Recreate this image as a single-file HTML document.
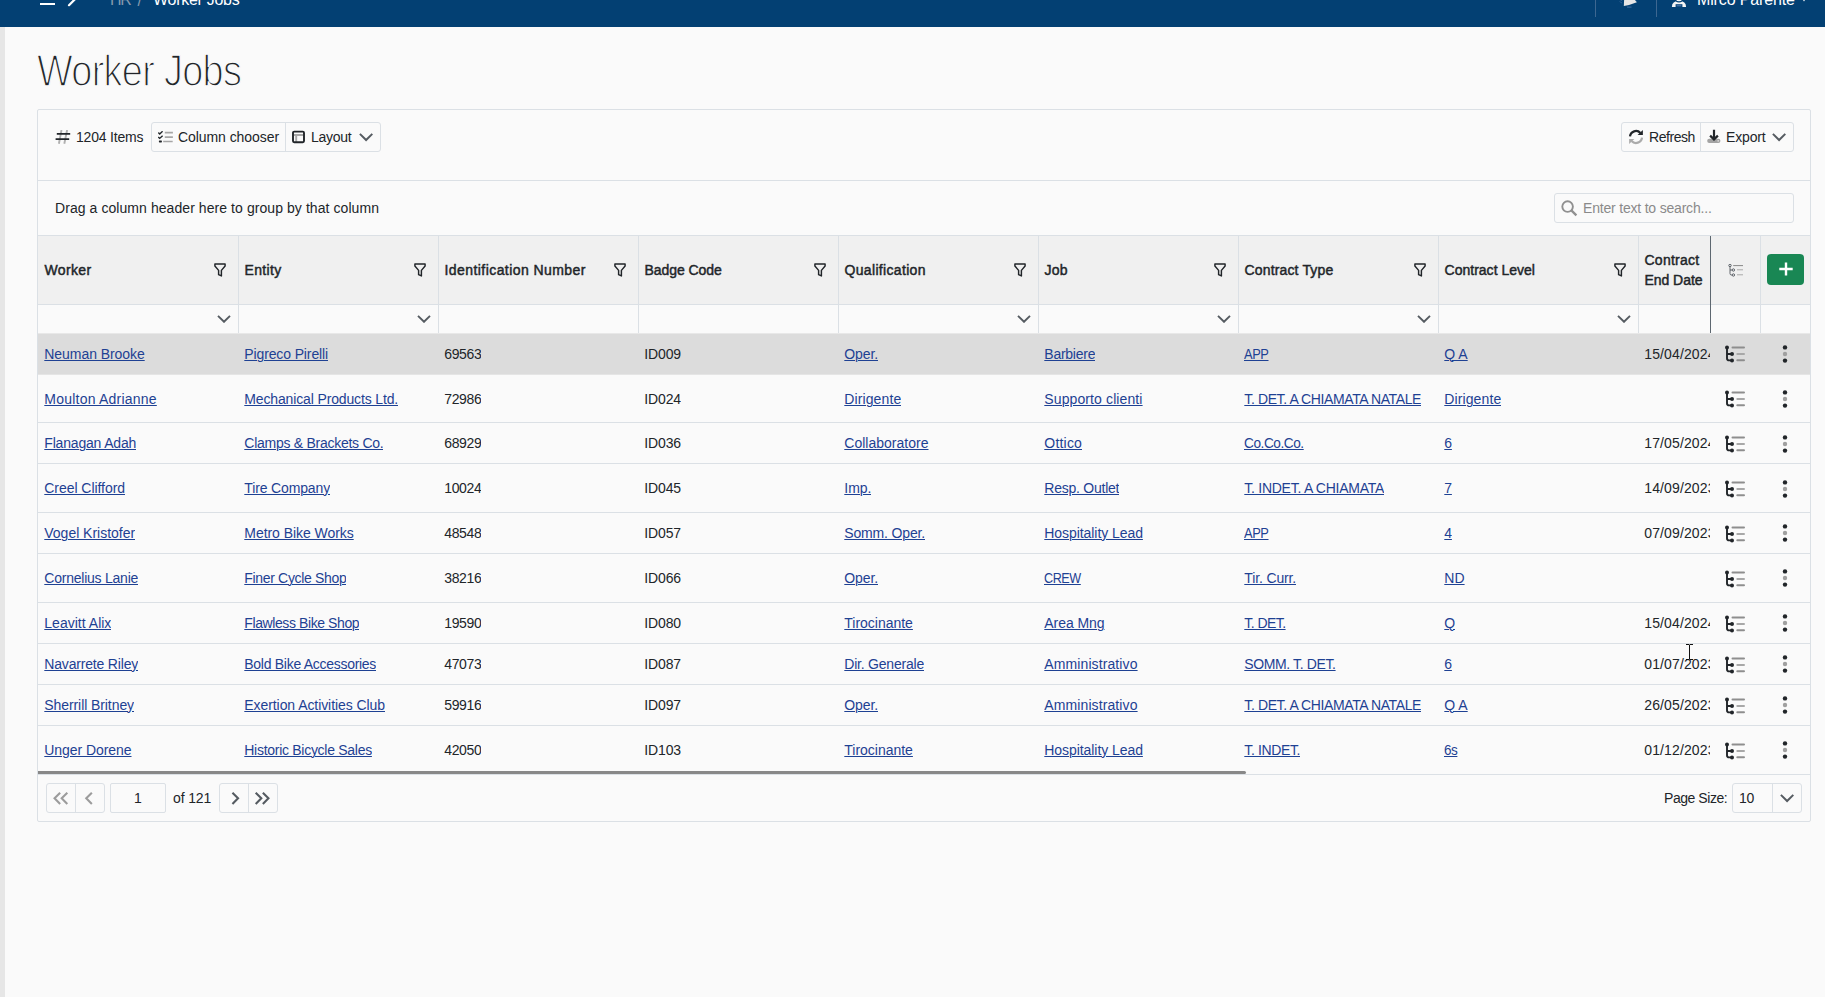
<!DOCTYPE html>
<html lang="en"><head><meta charset="utf-8"><title>Worker Jobs</title>
<style>
*{box-sizing:border-box;margin:0;padding:0}
html,body{width:1825px;height:997px;overflow:hidden;background:#fafafa}
body{position:relative;font-family:"Liberation Sans",sans-serif;font-size:14px;color:#212529;line-height:20px}
.abs{position:absolute}
#top{position:absolute;left:0;top:0;width:1825px;height:27px;background:#034073;overflow:hidden}
#top span{position:absolute;white-space:nowrap;font-size:16px;line-height:20px;color:#fff}
#stripe{position:absolute;left:0;top:27px;width:5px;height:970px;background:#e6e6e6}
h1{position:absolute;left:36.5px;top:46.5px;font-size:44px;line-height:48px;font-weight:400;color:#212529;white-space:nowrap;transform-origin:0 50%;transform:scaleX(.86);letter-spacing:-.8px;-webkit-text-stroke:1.5px #fafafa}
#card{position:absolute;left:37px;top:109px;width:1774px;height:713px;border:1px solid #dbe0e5;border-radius:2px;background:#fafafa}
.hl{position:absolute;height:1px;background:#dbe0e5}
.vl{position:absolute;width:1px;background:#dbe0e5}
.bg{position:absolute;border:1px solid #dbe0e5;border-radius:3px;background:#fafafa}
.t{position:absolute;white-space:nowrap;line-height:20px}
a{color:#1e4193;text-decoration:underline;text-underline-offset:1px;text-decoration-thickness:1px}
.hd{font-weight:400;color:#212529;-webkit-text-stroke:.45px #212529}
svg{position:absolute;display:block}
.row{position:absolute;left:38px;width:1772px}
.c{position:absolute;top:50%;white-space:nowrap;line-height:20px;overflow:hidden}
</style></head><body>
<div id="top">
<svg style="left:40px;top:0" width="40" height="8" viewBox="0 0 40 8"><rect x="0" y="3" width="15" height="2" fill="#fff"/><path d="M29 5.2L36 -1.8" stroke="#fff" stroke-width="2.2" stroke-linecap="round"/></svg>
<span style="left:110px;top:-10px;color:#8499ad;letter-spacing:-1.4px">HR</span>
<span style="left:137.6px;top:-8.6px;color:#8499ad">/</span>
<span style="left:153px;top:-10px;letter-spacing:-.28px">Worker Jobs</span>
<div class="abs" style="left:1595px;top:0;width:1px;height:17px;background:#3d6791"></div>
<div class="abs" style="left:1656px;top:0;width:1px;height:17px;background:#3d6791"></div>
<svg style="left:1618px;top:0" width="22" height="9" viewBox="0 0 22 9"><path d="M6.2 -1L5.8 5.9L11 5.1L18.9 2.2L16 -1z" fill="#e6e6e6"/><path d="M9 7.1H13.5" stroke="#3f6ea3" stroke-width="1"/><path d="M1.5 1.5L4 3M2 -0.5L4.2 1" stroke="#2c5c93" stroke-width=".9"/></svg>
<svg style="left:1671px;top:0" width="16" height="8" viewBox="0 0 16 8"><path d="M0.9 6.9Q0.9 1 8 1Q15.1 1 15.1 6.9z" fill="#f4f4f4"/><ellipse cx="8" cy="-1.6" rx="4.6" ry="4.2" fill="#034073"/><ellipse cx="8" cy="-2.4" rx="3.6" ry="3.6" fill="#f4f4f4"/><rect x="4.6" y="4.2" width="6.8" height="2.8" fill="#034073"/><rect x="5.6" y="4.8" width="4.8" height="1.6" fill="#3f6ea3"/></svg>
<span style="left:1697px;top:-10px;letter-spacing:-.14px">Mirco Parente</span>
<svg style="left:1801px;top:0" width="6" height="3" viewBox="0 0 6 3"><path d="M0.5 -2.5L3 1.5L5.5 -2.5z" fill="#fff"/></svg>
</div>
<div id="stripe"></div>
<h1>Worker Jobs</h1>
<div id="card"></div>
<svg style="left:55px;top:130px" width="16" height="14" viewBox="0 0 16 14"><path d="M6.5 0L3.9 13.8M12.1 0L9.3 13.8" stroke="#b0b0b0" stroke-width="1.9"/><path d="M1.8 3.9H15.2M0.6 9.05H14.2" stroke="#212529" stroke-width="1.8"/></svg>
<div class="t" style="left:76px;top:127px;letter-spacing:-0.197px">1204 Items</div>
<div class="bg" style="left:151px;top:122px;width:230px;height:30px"></div>
<div class="vl" style="left:285px;top:123px;height:28px"></div>
<svg style="left:158px;top:130.6px" width="15" height="12" viewBox="0 0 15 12"><path d="M0.3 1.6L1.7 3L4.6 0.3M0.3 6L1.7 7.4L4.6 4.7" fill="none" stroke="#212529" stroke-width="1.4"/><rect x="0.9" y="9.4" width="3" height="2" rx=".6" fill="#212529"/><path d="M6.8 1.6H14.9M6.8 6.1H14.9M5.2 10.5H14.7" stroke="#a6a6a6" stroke-width="1.7"/></svg>
<div class="t" style="left:178px;top:127px;letter-spacing:-0.067px">Column chooser</div>
<svg style="left:292px;top:130px" width="13" height="14" viewBox="0 0 13 14"><path d="M2 5H11M4.2 5V12" stroke="#a8a8a8" stroke-width="1.9" fill="none"/><rect x="1" y="1.6" width="11" height="10.6" rx="1.2" fill="none" stroke="#212529" stroke-width="1.9"/></svg>
<div class="t" style="left:311px;top:127px;letter-spacing:-0.274px">Layout</div>
<svg style="left:359px;top:133px" width="15" height="9" viewBox="0 0 15 9"><path d="M0.9 0.9L7.1 7L13.3 0.9" fill="none" stroke="#555b61" stroke-width="2"/></svg>

<div class="bg" style="left:1621px;top:122px;width:173px;height:30px"></div>
<div class="vl" style="left:1700px;top:123px;height:28px"></div>
<svg style="left:1628px;top:129px" width="16" height="16" viewBox="0 0 16 16"><path d="M2 7.4A6 6 0 0 1 12.4 4" fill="none" stroke="#212529" stroke-width="2.2"/><path d="M14.9 0.9V6H9.6z" fill="#212529"/><path d="M14 8.6A6 6 0 0 1 3.6 12" fill="none" stroke="#ababab" stroke-width="2.2"/><path d="M1.1 15.1V10H6.4z" fill="#ababab"/></svg>
<div class="t" style="left:1649px;top:127px;letter-spacing:-0.450px">Refresh</div>
<svg style="left:1707px;top:129px" width="14" height="15" viewBox="0 0 14 15"><rect x="0.2" y="9.7" width="13.2" height="4.2" rx="2" fill="#a3a3a3"/><circle cx="11.2" cy="11.9" r=".8" fill="#dcdcdc"/><path d="M7 0.8V9.6M3.1 6.6L7 10.4L10.9 6.6" fill="none" stroke="#212529" stroke-width="2.2"/></svg>
<div class="t" style="left:1726px;top:127px;letter-spacing:-0.145px">Export</div>
<svg style="left:1772px;top:133px" width="15" height="9" viewBox="0 0 15 9"><path d="M0.9 0.9L7.1 7L13.3 0.9" fill="none" stroke="#555b61" stroke-width="2"/></svg>

<div class="hl" style="left:38px;top:180px;width:1772px"></div>
<div class="t" style="left:55px;top:198px;letter-spacing:0.069px">Drag a column header here to group by that column</div>
<div class="bg" style="left:1554px;top:193px;width:240px;height:30px"></div>
<svg style="left:1561px;top:200px" width="17" height="17" viewBox="0 0 17 17"><circle cx="6.6" cy="6.6" r="5.3" fill="none" stroke="#909090" stroke-width="1.9"/><path d="M10.4 10.4L15.4 15.4" stroke="#909090" stroke-width="2.3"/></svg>
<div class="t" style="left:1583px;top:198px;color:#8a8a8a;letter-spacing:-0.194px">Enter text to search...</div>
<div class="abs" style="left:38px;top:235px;width:1772px;height:70px;background:#f0f0f0;border-top:1px solid #dbe0e5;border-bottom:1px solid #dbe0e5"></div>
<div class="t hd" style="left:44.5px;top:260px;letter-spacing:0.357px">Worker</div><svg style="left:213px;top:263px" width="14" height="15" viewBox="0 0 14 15"><path d="M1.9 0.9h10.2v2.1L8.4 7.4v5.5L5.6 11.7V7.4L1.9 3z" fill="none" stroke="#212529" stroke-width="1.45" stroke-linejoin="round"/></svg><svg style="left:217px;top:315px" width="14" height="8" viewBox="0 0 14 8"><path d="M1 0.9L7 6.8L13 0.9" fill="none" stroke="#555b61" stroke-width="1.9"/></svg>
<div class="t hd" style="left:244.5px;top:260px;letter-spacing:0.364px">Entity</div><svg style="left:413px;top:263px" width="14" height="15" viewBox="0 0 14 15"><path d="M1.9 0.9h10.2v2.1L8.4 7.4v5.5L5.6 11.7V7.4L1.9 3z" fill="none" stroke="#212529" stroke-width="1.45" stroke-linejoin="round"/></svg><svg style="left:417px;top:315px" width="14" height="8" viewBox="0 0 14 8"><path d="M1 0.9L7 6.8L13 0.9" fill="none" stroke="#555b61" stroke-width="1.9"/></svg>
<div class="t hd" style="left:444.5px;top:260px;letter-spacing:0.433px">Identification Number</div><svg style="left:613px;top:263px" width="14" height="15" viewBox="0 0 14 15"><path d="M1.9 0.9h10.2v2.1L8.4 7.4v5.5L5.6 11.7V7.4L1.9 3z" fill="none" stroke="#212529" stroke-width="1.45" stroke-linejoin="round"/></svg>
<div class="t hd" style="left:644.5px;top:260px;letter-spacing:-0.064px">Badge Code</div><svg style="left:813px;top:263px" width="14" height="15" viewBox="0 0 14 15"><path d="M1.9 0.9h10.2v2.1L8.4 7.4v5.5L5.6 11.7V7.4L1.9 3z" fill="none" stroke="#212529" stroke-width="1.45" stroke-linejoin="round"/></svg>
<div class="t hd" style="left:844.5px;top:260px;letter-spacing:0.327px">Qualification</div><svg style="left:1013px;top:263px" width="14" height="15" viewBox="0 0 14 15"><path d="M1.9 0.9h10.2v2.1L8.4 7.4v5.5L5.6 11.7V7.4L1.9 3z" fill="none" stroke="#212529" stroke-width="1.45" stroke-linejoin="round"/></svg><svg style="left:1017px;top:315px" width="14" height="8" viewBox="0 0 14 8"><path d="M1 0.9L7 6.8L13 0.9" fill="none" stroke="#555b61" stroke-width="1.9"/></svg>
<div class="t hd" style="left:1044.5px;top:260px;letter-spacing:0.241px">Job</div><svg style="left:1213px;top:263px" width="14" height="15" viewBox="0 0 14 15"><path d="M1.9 0.9h10.2v2.1L8.4 7.4v5.5L5.6 11.7V7.4L1.9 3z" fill="none" stroke="#212529" stroke-width="1.45" stroke-linejoin="round"/></svg><svg style="left:1217px;top:315px" width="14" height="8" viewBox="0 0 14 8"><path d="M1 0.9L7 6.8L13 0.9" fill="none" stroke="#555b61" stroke-width="1.9"/></svg>
<div class="t hd" style="left:1244.5px;top:260px;letter-spacing:0.153px">Contract Type</div><svg style="left:1413px;top:263px" width="14" height="15" viewBox="0 0 14 15"><path d="M1.9 0.9h10.2v2.1L8.4 7.4v5.5L5.6 11.7V7.4L1.9 3z" fill="none" stroke="#212529" stroke-width="1.45" stroke-linejoin="round"/></svg><svg style="left:1417px;top:315px" width="14" height="8" viewBox="0 0 14 8"><path d="M1 0.9L7 6.8L13 0.9" fill="none" stroke="#555b61" stroke-width="1.9"/></svg>
<div class="t hd" style="left:1444.5px;top:260px;letter-spacing:0.016px">Contract Level</div><svg style="left:1613px;top:263px" width="14" height="15" viewBox="0 0 14 15"><path d="M1.9 0.9h10.2v2.1L8.4 7.4v5.5L5.6 11.7V7.4L1.9 3z" fill="none" stroke="#212529" stroke-width="1.45" stroke-linejoin="round"/></svg><svg style="left:1617px;top:315px" width="14" height="8" viewBox="0 0 14 8"><path d="M1 0.9L7 6.8L13 0.9" fill="none" stroke="#555b61" stroke-width="1.9"/></svg>
<div class="t hd" style="left:1644.5px;top:250px;letter-spacing:0.260px">Contract</div><div class="t hd" style="left:1644.5px;top:270px;letter-spacing:-0.047px">End Date</div>
<div class="vl" style="left:238px;top:236px;height:97px"></div><div class="vl" style="left:438px;top:236px;height:97px"></div><div class="vl" style="left:638px;top:236px;height:97px"></div><div class="vl" style="left:838px;top:236px;height:97px"></div><div class="vl" style="left:1038px;top:236px;height:97px"></div><div class="vl" style="left:1238px;top:236px;height:97px"></div><div class="vl" style="left:1438px;top:236px;height:97px"></div><div class="vl" style="left:1638px;top:236px;height:97px"></div><div class="abs" style="left:1710px;top:236px;width:1px;height:97px;background:#5d6770"></div><div class="vl" style="left:1760px;top:236px;height:97px"></div>
<svg style="left:1728px;top:263.6px" width="16" height="13" viewBox="0 0 16 13"><path d="M2 2V9.5Q2 11 3.5 11H4.4M2 6H4.4" fill="none" stroke="#3f454c" stroke-width=".8"/><circle cx="2" cy="1.5" r="1.2" fill="#f0f0f0" stroke="#3f454c" stroke-width=".8"/><circle cx="5.4" cy="6" r="1.2" fill="#f0f0f0" stroke="#3f454c" stroke-width=".8"/><circle cx="5.4" cy="11" r="1.2" fill="#f0f0f0" stroke="#3f454c" stroke-width=".8"/><path d="M5.2 1.6H15" stroke="#7d7d7d" stroke-width=".9"/><path d="M9 5.8H15M9 10.8H15" stroke="#a2a2a2" stroke-width=".9"/></svg>
<div class="abs" style="left:1767px;top:254px;width:37px;height:31px;border-radius:4px;background:#198754"></div><svg style="left:1778.5px;top:262.3px" width="14" height="14" viewBox="0 0 14 14"><path d="M7 0.6V13.4M0.3 7H13.7" stroke="#fff" stroke-width="2.4"/></svg>
<div class="abs" style="left:38px;top:333px;width:1772px;height:42px;background:#e5e5e5;border-top:1px solid #e8e8e8"></div><div class="row" style="top:334px;height:40px;background:#dcdcdc;"><div class="c" style="left:6.3px;margin-top:-10.5px;max-width:192px;letter-spacing:-0.059px"><a>Neuman Brooke</a></div><div class="c" style="left:206.3px;margin-top:-10.5px;max-width:192px;letter-spacing:-0.126px"><a>Pigreco Pirelli</a></div><div class="c" style="left:406.3px;margin-top:-10.5px;max-width:192px;letter-spacing:-0.388px">69563</div><div class="c" style="left:606.3px;margin-top:-10.5px;max-width:192px;letter-spacing:-0.152px">ID009</div><div class="c" style="left:806.3px;margin-top:-10.5px;max-width:192px;letter-spacing:-0.090px"><a>Oper.</a></div><div class="c" style="left:1006.3px;margin-top:-10.5px;max-width:192px;letter-spacing:-0.253px"><a>Barbiere</a></div><div class="c" style="left:1206.3px;margin-top:-10.5px;max-width:192px;letter-spacing:-0.450px"><a style="display:inline-block;transform-origin:0 50%;transform:scaleX(0.919)">APP</a></div><div class="c" style="left:1406.3px;margin-top:-10.5px;max-width:192px;letter-spacing:0.014px"><a>Q A</a></div><div class="c" style="left:1606.3px;margin-top:-10.5px;max-width:65.7px;letter-spacing:0.122px">15/04/2024</div><svg style="left:1686px;top:50%;margin-top:-9.0px" width="22" height="18" viewBox="0 0 22 18"><path d="M3 2.4V13.2Q3 15.4 5.2 15.4H8M3 9H8" fill="none" stroke="#212529" stroke-width="1.9"/><circle cx="3" cy="2.4" r="2" fill="#212529"/><circle cx="8" cy="9" r="2" fill="#212529"/><circle cx="8" cy="15.4" r="2" fill="#212529"/><path d="M8.5 2.5H20M13.3 15.3H20" stroke="#8e8e8e" stroke-width="2" stroke-linecap="round"/><path d="M13.3 9H20" stroke="#a8a8a8" stroke-width="2" stroke-linecap="round"/></svg><svg style="left:1744.2px;top:50%;margin-top:-9.1px" width="6" height="18" viewBox="0 0 6 18"><circle cx="3" cy="2.4" r="2.2" fill="#212529"/><circle cx="3" cy="9" r="2.2" fill="#a0a0a0"/><circle cx="3" cy="15.6" r="2.2" fill="#212529"/></svg></div>
<div class="row" style="top:374px;height:48px;"><div class="c" style="left:6.3px;margin-top:-9.2px;max-width:192px;letter-spacing:0.221px"><a>Moulton Adrianne</a></div><div class="c" style="left:206.3px;margin-top:-9.2px;max-width:192px;letter-spacing:-0.142px"><a>Mechanical Products Ltd.</a></div><div class="c" style="left:406.3px;margin-top:-9.2px;max-width:192px;letter-spacing:-0.388px">72986</div><div class="c" style="left:606.3px;margin-top:-9.2px;max-width:192px;letter-spacing:-0.152px">ID024</div><div class="c" style="left:806.3px;margin-top:-9.2px;max-width:192px;letter-spacing:0.108px"><a>Dirigente</a></div><div class="c" style="left:1006.3px;margin-top:-9.2px;max-width:192px;letter-spacing:0.112px"><a>Supporto clienti</a></div><div class="c" style="left:1206.3px;margin-top:-9.2px;max-width:192px;letter-spacing:-0.390px"><a>T. DET. A CHIAMATA NATALE</a></div><div class="c" style="left:1406.3px;margin-top:-9.2px;max-width:192px;letter-spacing:0.108px"><a>Dirigente</a></div><svg style="left:1686px;top:50%;margin-top:-7.7px" width="22" height="18" viewBox="0 0 22 18"><path d="M3 2.4V13.2Q3 15.4 5.2 15.4H8M3 9H8" fill="none" stroke="#212529" stroke-width="1.9"/><circle cx="3" cy="2.4" r="2" fill="#212529"/><circle cx="8" cy="9" r="2" fill="#212529"/><circle cx="8" cy="15.4" r="2" fill="#212529"/><path d="M8.5 2.5H20M13.3 15.3H20" stroke="#8e8e8e" stroke-width="2" stroke-linecap="round"/><path d="M13.3 9H20" stroke="#a8a8a8" stroke-width="2" stroke-linecap="round"/></svg><svg style="left:1744.2px;top:50%;margin-top:-7.8px" width="6" height="18" viewBox="0 0 6 18"><circle cx="3" cy="2.4" r="2.2" fill="#212529"/><circle cx="3" cy="9" r="2.2" fill="#a0a0a0"/><circle cx="3" cy="15.6" r="2.2" fill="#212529"/></svg></div>
<div class="row" style="top:422px;height:41px;border-top:1px solid #dbe0e5;"><div class="c" style="left:6.3px;margin-top:-9.6px;max-width:192px;letter-spacing:-0.185px"><a>Flanagan Adah</a></div><div class="c" style="left:206.3px;margin-top:-9.6px;max-width:192px;letter-spacing:-0.263px"><a>Clamps &amp; Brackets Co.</a></div><div class="c" style="left:406.3px;margin-top:-9.6px;max-width:192px;letter-spacing:-0.388px">68929</div><div class="c" style="left:606.3px;margin-top:-9.6px;max-width:192px;letter-spacing:-0.152px">ID036</div><div class="c" style="left:806.3px;margin-top:-9.6px;max-width:192px;letter-spacing:0.011px"><a>Collaboratore</a></div><div class="c" style="left:1006.3px;margin-top:-9.6px;max-width:192px;letter-spacing:0.204px"><a>Ottico</a></div><div class="c" style="left:1206.3px;margin-top:-9.6px;max-width:192px;letter-spacing:-0.450px"><a style="display:inline-block;transform-origin:0 50%;transform:scaleX(0.974)">Co.Co.Co.</a></div><div class="c" style="left:1406.3px;margin-top:-9.6px;max-width:192px;letter-spacing:-0.197px"><a>6</a></div><div class="c" style="left:1606.3px;margin-top:-9.6px;max-width:65.7px;letter-spacing:0.122px">17/05/2024</div><svg style="left:1686px;top:50%;margin-top:-8.1px" width="22" height="18" viewBox="0 0 22 18"><path d="M3 2.4V13.2Q3 15.4 5.2 15.4H8M3 9H8" fill="none" stroke="#212529" stroke-width="1.9"/><circle cx="3" cy="2.4" r="2" fill="#212529"/><circle cx="8" cy="9" r="2" fill="#212529"/><circle cx="8" cy="15.4" r="2" fill="#212529"/><path d="M8.5 2.5H20M13.3 15.3H20" stroke="#8e8e8e" stroke-width="2" stroke-linecap="round"/><path d="M13.3 9H20" stroke="#a8a8a8" stroke-width="2" stroke-linecap="round"/></svg><svg style="left:1744.2px;top:50%;margin-top:-8.2px" width="6" height="18" viewBox="0 0 6 18"><circle cx="3" cy="2.4" r="2.2" fill="#212529"/><circle cx="3" cy="9" r="2.2" fill="#a0a0a0"/><circle cx="3" cy="15.6" r="2.2" fill="#212529"/></svg></div>
<div class="row" style="top:463px;height:49px;border-top:1px solid #dbe0e5;"><div class="c" style="left:6.3px;margin-top:-9.9px;max-width:192px;letter-spacing:-0.053px"><a>Creel Clifford</a></div><div class="c" style="left:206.3px;margin-top:-9.9px;max-width:192px;letter-spacing:-0.142px"><a>Tire Company</a></div><div class="c" style="left:406.3px;margin-top:-9.9px;max-width:192px;letter-spacing:-0.388px">10024</div><div class="c" style="left:606.3px;margin-top:-9.9px;max-width:192px;letter-spacing:-0.152px">ID045</div><div class="c" style="left:806.3px;margin-top:-9.9px;max-width:192px;letter-spacing:-0.059px"><a>Imp.</a></div><div class="c" style="left:1006.3px;margin-top:-9.9px;max-width:192px;letter-spacing:-0.244px"><a>Resp. Outlet</a></div><div class="c" style="left:1206.3px;margin-top:-9.9px;max-width:192px;letter-spacing:-0.263px"><a>T. INDET. A CHIAMATA</a></div><div class="c" style="left:1406.3px;margin-top:-9.9px;max-width:192px;letter-spacing:-0.197px"><a>7</a></div><div class="c" style="left:1606.3px;margin-top:-9.9px;max-width:65.7px;letter-spacing:0.122px">14/09/2023</div><svg style="left:1686px;top:50%;margin-top:-8.4px" width="22" height="18" viewBox="0 0 22 18"><path d="M3 2.4V13.2Q3 15.4 5.2 15.4H8M3 9H8" fill="none" stroke="#212529" stroke-width="1.9"/><circle cx="3" cy="2.4" r="2" fill="#212529"/><circle cx="8" cy="9" r="2" fill="#212529"/><circle cx="8" cy="15.4" r="2" fill="#212529"/><path d="M8.5 2.5H20M13.3 15.3H20" stroke="#8e8e8e" stroke-width="2" stroke-linecap="round"/><path d="M13.3 9H20" stroke="#a8a8a8" stroke-width="2" stroke-linecap="round"/></svg><svg style="left:1744.2px;top:50%;margin-top:-8.5px" width="6" height="18" viewBox="0 0 6 18"><circle cx="3" cy="2.4" r="2.2" fill="#212529"/><circle cx="3" cy="9" r="2.2" fill="#a0a0a0"/><circle cx="3" cy="15.6" r="2.2" fill="#212529"/></svg></div>
<div class="row" style="top:512px;height:41px;border-top:1px solid #dbe0e5;"><div class="c" style="left:6.3px;margin-top:-10px;max-width:192px;letter-spacing:-0.018px"><a>Vogel Kristofer</a></div><div class="c" style="left:206.3px;margin-top:-10px;max-width:192px;letter-spacing:-0.051px"><a>Metro Bike Works</a></div><div class="c" style="left:406.3px;margin-top:-10px;max-width:192px;letter-spacing:-0.388px">48548</div><div class="c" style="left:606.3px;margin-top:-10px;max-width:192px;letter-spacing:-0.152px">ID057</div><div class="c" style="left:806.3px;margin-top:-10px;max-width:192px;letter-spacing:-0.161px"><a>Somm. Oper.</a></div><div class="c" style="left:1006.3px;margin-top:-10px;max-width:192px;letter-spacing:-0.064px"><a>Hospitality Lead</a></div><div class="c" style="left:1206.3px;margin-top:-10px;max-width:192px;letter-spacing:-0.450px"><a style="display:inline-block;transform-origin:0 50%;transform:scaleX(0.919)">APP</a></div><div class="c" style="left:1406.3px;margin-top:-10px;max-width:192px;letter-spacing:-0.197px"><a>4</a></div><div class="c" style="left:1606.3px;margin-top:-10px;max-width:65.7px;letter-spacing:0.122px">07/09/2023</div><svg style="left:1686px;top:50%;margin-top:-8.5px" width="22" height="18" viewBox="0 0 22 18"><path d="M3 2.4V13.2Q3 15.4 5.2 15.4H8M3 9H8" fill="none" stroke="#212529" stroke-width="1.9"/><circle cx="3" cy="2.4" r="2" fill="#212529"/><circle cx="8" cy="9" r="2" fill="#212529"/><circle cx="8" cy="15.4" r="2" fill="#212529"/><path d="M8.5 2.5H20M13.3 15.3H20" stroke="#8e8e8e" stroke-width="2" stroke-linecap="round"/><path d="M13.3 9H20" stroke="#a8a8a8" stroke-width="2" stroke-linecap="round"/></svg><svg style="left:1744.2px;top:50%;margin-top:-8.6px" width="6" height="18" viewBox="0 0 6 18"><circle cx="3" cy="2.4" r="2.2" fill="#212529"/><circle cx="3" cy="9" r="2.2" fill="#a0a0a0"/><circle cx="3" cy="15.6" r="2.2" fill="#212529"/></svg></div>
<div class="row" style="top:553px;height:49px;border-top:1px solid #dbe0e5;"><div class="c" style="left:6.3px;margin-top:-10px;max-width:192px;letter-spacing:-0.233px"><a>Cornelius Lanie</a></div><div class="c" style="left:206.3px;margin-top:-10px;max-width:192px;letter-spacing:-0.331px"><a>Finer Cycle Shop</a></div><div class="c" style="left:406.3px;margin-top:-10px;max-width:192px;letter-spacing:-0.388px">38216</div><div class="c" style="left:606.3px;margin-top:-10px;max-width:192px;letter-spacing:-0.152px">ID066</div><div class="c" style="left:806.3px;margin-top:-10px;max-width:192px;letter-spacing:-0.090px"><a>Oper.</a></div><div class="c" style="left:1006.3px;margin-top:-10px;max-width:192px;letter-spacing:-0.450px"><a style="display:inline-block;transform-origin:0 50%;transform:scaleX(0.898)">CREW</a></div><div class="c" style="left:1206.3px;margin-top:-10px;max-width:192px;letter-spacing:-0.136px"><a>Tir. Curr.</a></div><div class="c" style="left:1406.3px;margin-top:-10px;max-width:192px;letter-spacing:0.033px"><a>ND</a></div><svg style="left:1686px;top:50%;margin-top:-8.5px" width="22" height="18" viewBox="0 0 22 18"><path d="M3 2.4V13.2Q3 15.4 5.2 15.4H8M3 9H8" fill="none" stroke="#212529" stroke-width="1.9"/><circle cx="3" cy="2.4" r="2" fill="#212529"/><circle cx="8" cy="9" r="2" fill="#212529"/><circle cx="8" cy="15.4" r="2" fill="#212529"/><path d="M8.5 2.5H20M13.3 15.3H20" stroke="#8e8e8e" stroke-width="2" stroke-linecap="round"/><path d="M13.3 9H20" stroke="#a8a8a8" stroke-width="2" stroke-linecap="round"/></svg><svg style="left:1744.2px;top:50%;margin-top:-8.6px" width="6" height="18" viewBox="0 0 6 18"><circle cx="3" cy="2.4" r="2.2" fill="#212529"/><circle cx="3" cy="9" r="2.2" fill="#a0a0a0"/><circle cx="3" cy="15.6" r="2.2" fill="#212529"/></svg></div>
<div class="row" style="top:602px;height:41px;border-top:1px solid #dbe0e5;"><div class="c" style="left:6.3px;margin-top:-10px;max-width:192px;letter-spacing:0.014px"><a>Leavitt Alix</a></div><div class="c" style="left:206.3px;margin-top:-10px;max-width:192px;letter-spacing:-0.404px"><a>Flawless Bike Shop</a></div><div class="c" style="left:406.3px;margin-top:-10px;max-width:192px;letter-spacing:-0.388px">19590</div><div class="c" style="left:606.3px;margin-top:-10px;max-width:192px;letter-spacing:-0.152px">ID080</div><div class="c" style="left:806.3px;margin-top:-10px;max-width:192px;letter-spacing:-0.014px"><a>Tirocinante</a></div><div class="c" style="left:1006.3px;margin-top:-10px;max-width:192px;letter-spacing:-0.063px"><a>Area Mng</a></div><div class="c" style="left:1206.3px;margin-top:-10px;max-width:192px;letter-spacing:-0.546px"><a>T. DET.</a></div><div class="c" style="left:1406.3px;margin-top:-10px;max-width:192px;letter-spacing:-0.091px"><a>Q</a></div><div class="c" style="left:1606.3px;margin-top:-10px;max-width:65.7px;letter-spacing:0.122px">15/04/2024</div><svg style="left:1686px;top:50%;margin-top:-8.5px" width="22" height="18" viewBox="0 0 22 18"><path d="M3 2.4V13.2Q3 15.4 5.2 15.4H8M3 9H8" fill="none" stroke="#212529" stroke-width="1.9"/><circle cx="3" cy="2.4" r="2" fill="#212529"/><circle cx="8" cy="9" r="2" fill="#212529"/><circle cx="8" cy="15.4" r="2" fill="#212529"/><path d="M8.5 2.5H20M13.3 15.3H20" stroke="#8e8e8e" stroke-width="2" stroke-linecap="round"/><path d="M13.3 9H20" stroke="#a8a8a8" stroke-width="2" stroke-linecap="round"/></svg><svg style="left:1744.2px;top:50%;margin-top:-8.6px" width="6" height="18" viewBox="0 0 6 18"><circle cx="3" cy="2.4" r="2.2" fill="#212529"/><circle cx="3" cy="9" r="2.2" fill="#a0a0a0"/><circle cx="3" cy="15.6" r="2.2" fill="#212529"/></svg></div>
<div class="row" style="top:643px;height:41px;border-top:1px solid #dbe0e5;"><div class="c" style="left:6.3px;margin-top:-10px;max-width:192px;letter-spacing:-0.179px"><a>Navarrete Riley</a></div><div class="c" style="left:206.3px;margin-top:-10px;max-width:192px;letter-spacing:-0.283px"><a>Bold Bike Accessories</a></div><div class="c" style="left:406.3px;margin-top:-10px;max-width:192px;letter-spacing:-0.388px">47073</div><div class="c" style="left:606.3px;margin-top:-10px;max-width:192px;letter-spacing:-0.152px">ID087</div><div class="c" style="left:806.3px;margin-top:-10px;max-width:192px;letter-spacing:-0.214px"><a>Dir. Generale</a></div><div class="c" style="left:1006.3px;margin-top:-10px;max-width:192px;letter-spacing:0.107px"><a>Amministrativo</a></div><div class="c" style="left:1206.3px;margin-top:-10px;max-width:192px;letter-spacing:-0.377px"><a>SOMM. T. DET.</a></div><div class="c" style="left:1406.3px;margin-top:-10px;max-width:192px;letter-spacing:-0.197px"><a>6</a></div><div class="c" style="left:1606.3px;margin-top:-10px;max-width:65.7px;letter-spacing:0.122px">01/07/2023</div><svg style="left:1686px;top:50%;margin-top:-8.5px" width="22" height="18" viewBox="0 0 22 18"><path d="M3 2.4V13.2Q3 15.4 5.2 15.4H8M3 9H8" fill="none" stroke="#212529" stroke-width="1.9"/><circle cx="3" cy="2.4" r="2" fill="#212529"/><circle cx="8" cy="9" r="2" fill="#212529"/><circle cx="8" cy="15.4" r="2" fill="#212529"/><path d="M8.5 2.5H20M13.3 15.3H20" stroke="#8e8e8e" stroke-width="2" stroke-linecap="round"/><path d="M13.3 9H20" stroke="#a8a8a8" stroke-width="2" stroke-linecap="round"/></svg><svg style="left:1744.2px;top:50%;margin-top:-8.6px" width="6" height="18" viewBox="0 0 6 18"><circle cx="3" cy="2.4" r="2.2" fill="#212529"/><circle cx="3" cy="9" r="2.2" fill="#a0a0a0"/><circle cx="3" cy="15.6" r="2.2" fill="#212529"/></svg></div>
<div class="row" style="top:684px;height:41px;border-top:1px solid #dbe0e5;"><div class="c" style="left:6.3px;margin-top:-10px;max-width:192px;letter-spacing:-0.083px"><a>Sherrill Britney</a></div><div class="c" style="left:206.3px;margin-top:-10px;max-width:192px;letter-spacing:-0.071px"><a>Exertion Activities Club</a></div><div class="c" style="left:406.3px;margin-top:-10px;max-width:192px;letter-spacing:-0.388px">59916</div><div class="c" style="left:606.3px;margin-top:-10px;max-width:192px;letter-spacing:-0.152px">ID097</div><div class="c" style="left:806.3px;margin-top:-10px;max-width:192px;letter-spacing:-0.090px"><a>Oper.</a></div><div class="c" style="left:1006.3px;margin-top:-10px;max-width:192px;letter-spacing:0.107px"><a>Amministrativo</a></div><div class="c" style="left:1206.3px;margin-top:-10px;max-width:192px;letter-spacing:-0.390px"><a>T. DET. A CHIAMATA NATALE</a></div><div class="c" style="left:1406.3px;margin-top:-10px;max-width:192px;letter-spacing:0.014px"><a>Q A</a></div><div class="c" style="left:1606.3px;margin-top:-10px;max-width:65.7px;letter-spacing:0.122px">26/05/2023</div><svg style="left:1686px;top:50%;margin-top:-8.5px" width="22" height="18" viewBox="0 0 22 18"><path d="M3 2.4V13.2Q3 15.4 5.2 15.4H8M3 9H8" fill="none" stroke="#212529" stroke-width="1.9"/><circle cx="3" cy="2.4" r="2" fill="#212529"/><circle cx="8" cy="9" r="2" fill="#212529"/><circle cx="8" cy="15.4" r="2" fill="#212529"/><path d="M8.5 2.5H20M13.3 15.3H20" stroke="#8e8e8e" stroke-width="2" stroke-linecap="round"/><path d="M13.3 9H20" stroke="#a8a8a8" stroke-width="2" stroke-linecap="round"/></svg><svg style="left:1744.2px;top:50%;margin-top:-8.6px" width="6" height="18" viewBox="0 0 6 18"><circle cx="3" cy="2.4" r="2.2" fill="#212529"/><circle cx="3" cy="9" r="2.2" fill="#a0a0a0"/><circle cx="3" cy="15.6" r="2.2" fill="#212529"/></svg></div>
<div class="row" style="top:725px;height:49px;border-top:1px solid #dbe0e5;"><div class="c" style="left:6.3px;margin-top:-10px;max-width:192px;letter-spacing:-0.061px"><a>Unger Dorene</a></div><div class="c" style="left:206.3px;margin-top:-10px;max-width:192px;letter-spacing:-0.283px"><a>Historic Bicycle Sales</a></div><div class="c" style="left:406.3px;margin-top:-10px;max-width:192px;letter-spacing:-0.388px">42050</div><div class="c" style="left:606.3px;margin-top:-10px;max-width:192px;letter-spacing:-0.152px">ID103</div><div class="c" style="left:806.3px;margin-top:-10px;max-width:192px;letter-spacing:-0.014px"><a>Tirocinante</a></div><div class="c" style="left:1006.3px;margin-top:-10px;max-width:192px;letter-spacing:-0.064px"><a>Hospitality Lead</a></div><div class="c" style="left:1206.3px;margin-top:-10px;max-width:192px;letter-spacing:-0.369px"><a>T. INDET.</a></div><div class="c" style="left:1406.3px;margin-top:-10px;max-width:192px;letter-spacing:-0.450px"><a style="display:inline-block;transform-origin:0 50%;transform:scaleX(0.964)">6s</a></div><div class="c" style="left:1606.3px;margin-top:-10px;max-width:65.7px;letter-spacing:0.122px">01/12/2023</div><svg style="left:1686px;top:50%;margin-top:-8.5px" width="22" height="18" viewBox="0 0 22 18"><path d="M3 2.4V13.2Q3 15.4 5.2 15.4H8M3 9H8" fill="none" stroke="#212529" stroke-width="1.9"/><circle cx="3" cy="2.4" r="2" fill="#212529"/><circle cx="8" cy="9" r="2" fill="#212529"/><circle cx="8" cy="15.4" r="2" fill="#212529"/><path d="M8.5 2.5H20M13.3 15.3H20" stroke="#8e8e8e" stroke-width="2" stroke-linecap="round"/><path d="M13.3 9H20" stroke="#a8a8a8" stroke-width="2" stroke-linecap="round"/></svg><svg style="left:1744.2px;top:50%;margin-top:-8.6px" width="6" height="18" viewBox="0 0 6 18"><circle cx="3" cy="2.4" r="2.2" fill="#212529"/><circle cx="3" cy="9" r="2.2" fill="#a0a0a0"/><circle cx="3" cy="15.6" r="2.2" fill="#212529"/></svg></div>
<div class="hl" style="left:38px;top:774px;width:1772px"></div>
<div class="abs" style="left:38px;top:771px;width:1208px;height:3px;background:#888;border-radius:0 2px 2px 0"></div>
<div class="bg" style="left:46px;top:783px;width:59px;height:30px"></div><div class="vl" style="left:75px;top:784px;height:28px"></div>
<svg style="left:50px;top:790px" width="22" height="16" viewBox="0 0 22 16"><path d="M10.15 2.7L4.55 8.3L10.15 13.9M17.3 2.7L11.7 8.3L17.3 13.9" fill="none" stroke="#9c9c9c" stroke-width="2.1"/></svg>
<svg style="left:82px;top:790px" width="14" height="16" viewBox="0 0 14 16"><path d="M9.85 2.7L4.25 8.3L9.85 13.9" fill="none" stroke="#9c9c9c" stroke-width="2.1"/></svg>
<div class="bg" style="left:110px;top:783px;width:56px;height:30px;border-radius:2px"></div>
<div class="t" style="left:110px;top:788px;width:56px;text-align:center">1</div>
<div class="t" style="left:173px;top:788px;letter-spacing:-0.123px">of 121</div>
<div class="bg" style="left:219px;top:783px;width:59px;height:30px"></div><div class="vl" style="left:248px;top:784px;height:28px"></div>
<svg style="left:228px;top:790px" width="14" height="16" viewBox="0 0 14 16"><path d="M4.45 2.7L10.05 8.3L4.45 13.9" fill="none" stroke="#555b61" stroke-width="2.1"/></svg>
<svg style="left:252px;top:790px" width="22" height="16" viewBox="0 0 22 16"><path d="M3.7 2.7L9.3 8.3L3.7 13.9M10.85 2.7L16.45 8.3L10.85 13.9" fill="none" stroke="#555b61" stroke-width="2.1"/></svg>
<div class="t" style="left:1664px;top:788px;letter-spacing:-0.450px">Page Size:</div>
<div class="bg" style="left:1732px;top:783px;width:70px;height:30px"></div><div class="vl" style="left:1772px;top:784px;height:28px"></div>
<div class="t" style="left:1739px;top:788px;letter-spacing:-0.239px">10</div>
<svg style="left:1780px;top:794px" width="15" height="9" viewBox="0 0 15 9"><path d="M0.9 0.9L7.1 7L13.3 0.9" fill="none" stroke="#555b61" stroke-width="2"/></svg>
<svg style="left:1685px;top:643px" width="10" height="18" viewBox="0 0 10 18"><path d="M1 1.5H4.2M4.8 1.5H8M1 16.5H4.2M4.8 16.5H8M4.5 1.8V16.2" fill="none" stroke="#111" stroke-width="1"/></svg>
</body></html>
